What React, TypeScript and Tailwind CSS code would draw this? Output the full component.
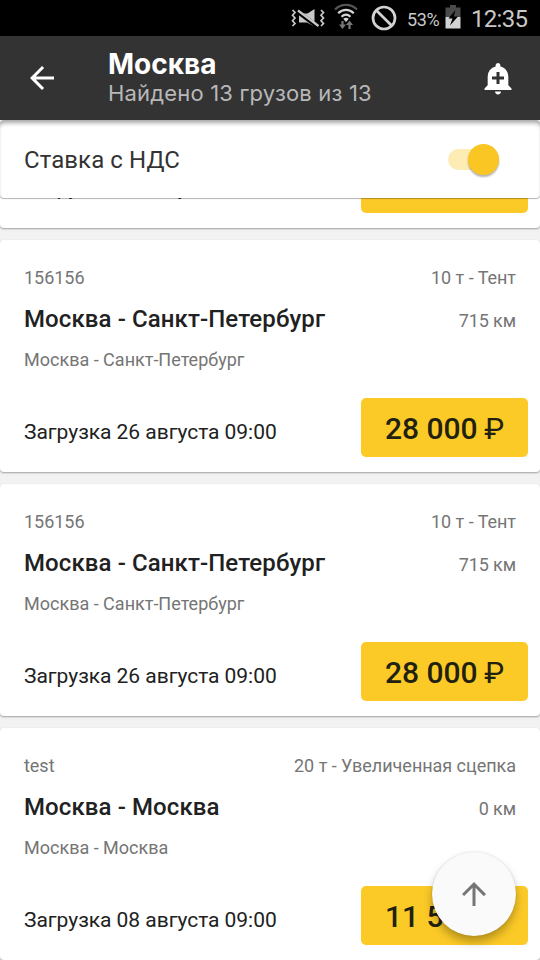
import React from "react";
import { MdAddAlert, MdArrowBack, MdArrowUpward } from "react-icons/md";

interface Cargo {
  id: string;
  name: string;
  load: string;
  title: string;
  distance: string;
  route: string;
  date: string;
  price: string;
}

const cargos: Cargo[] = [
  {
    id: "c1",
    name: "156156",
    load: "10 т - Тент",
    title: "Москва - Санкт-Петербург",
    distance: "715 км",
    route: "Москва - Санкт-Петербург",
    date: "Загрузка 26 августа 09:00",
    price: "28 000",
  },
  {
    id: "c2",
    name: "156156",
    load: "10 т - Тент",
    title: "Москва - Санкт-Петербург",
    distance: "715 км",
    route: "Москва - Санкт-Петербург",
    date: "Загрузка 26 августа 09:00",
    price: "28 000",
  },
  {
    id: "c3",
    name: "156156",
    load: "10 т - Тент",
    title: "Москва - Санкт-Петербург",
    distance: "715 км",
    route: "Москва - Санкт-Петербург",
    date: "Загрузка 26 августа 09:00",
    price: "28 000",
  },
  {
    id: "c4",
    name: "test",
    load: "20 т - Увеличенная сцепка",
    title: "Москва - Москва",
    distance: "0 км",
    route: "Москва - Москва",
    date: "Загрузка 08 августа 09:00",
    price: "11 500",
  },
];

function MuteIcon() {
  return (
    <svg width="34" height="20" viewBox="0 0 34 20" fill="none" stroke="#c8c8c8" strokeWidth="1.700">
      <path d="M1.500 2l2.500 2.500-2.500 2.700 2.500 2.800-2.500 2.700 2.500 2.800-2.500 2.500" />
      <path d="M30 2l2.500 2.500-2.500 2.700 2.500 2.800-2.500 2.700 2.500 2.800-2.500 2.500" />
      <path d="M8 5.500h8.500L23.500 1v17.500L16 14.500H8z" fill="#c8c8c8" stroke="none" />
      <path d="M6.500 3.500l20.500 15.500" stroke="#000" strokeWidth="4.200" />
      <path d="M7 2.500l20.500 15.500" strokeWidth="2.200" />
    </svg>
  );
}

function WifiIcon() {
  return (
    <svg width="24" height="27" viewBox="0 0 24 27" fill="none" stroke="#d6d6d6" strokeWidth="2.200">
      <path d="M1 6.500c6.200-6.200 15.800-6.200 22 0" stroke="#555" />
      <path d="M4.200 10.200c4.600-4.400 11-4.400 15.600 0M7.500 13.800c2.800-2.600 6.200-2.600 9 0" />
      <path d="M9.200 15.800c1.700-1.400 3.900-1.400 5.600 0L12 19z" fill="#d6d6d6" stroke="none" />
      <path d="M8.500 18v5M15.500 26v-5" stroke="#777" strokeWidth="2.200" />
      <path d="M5 21.500h7L8.500 26zM12 22h7l-3.500-4.500z" fill="#777" stroke="none" />
    </svg>
  );
}

function BlockedIcon() {
  return (
    <svg width="26" height="26" viewBox="0 0 26 26" fill="none" stroke="#d2d2d2" strokeWidth="2.700">
      <circle cx="13" cy="13" r="11" />
      <path d="M5.200 5.200l15.600 15.600" />
    </svg>
  );
}

function BatteryIcon() {
  return (
    <svg width="16" height="24" viewBox="0 0 16 24">
      <path d="M5 0h6v2.500h4.500V12H.5V2.500H5z" fill="#4a4a4a" />
      <path d="M.5 12h15v11.500H.5z" fill="#d2d2d2" />
      <path d="M10.500 5L3.500 13.500h4L5 20.500l8-9H8.800z" fill="#000" />
    </svg>
  );
}

function StatusBar() {
  return (
    <div className="flex h-9 shrink-0 items-center justify-end bg-black pr-3 text-[#c8c8c8]">
      <MuteIcon />
      <span className="ml-[9px] pb-1">
        <WifiIcon />
      </span>
      <span className="ml-[13px]">
        <BlockedIcon />
      </span>
      <span className="ml-[10px] w-[32px] pt-0.5 text-[18px] tracking-[-0.4px]">53%</span>
      <span className="ml-[6px] pb-0.5">
        <BatteryIcon />
      </span>
      <span className="ml-[10px] w-[57px] pt-0.5 text-[24px] tracking-[-0.7px]">12:35</span>
    </div>
  );
}

function Toolbar() {
  return (
    <header className="flex h-21 shrink-0 items-center bg-[#333] px-6">
      <button className="text-white">
        <MdArrowBack size={36} />
      </button>
      <div className="ml-12 flex-1 font-['Inter',sans-serif]">
        <h1 className="text-[28px] leading-[30px] font-bold text-white">Москва</h1>
        <p className="text-[22px] leading-[28px] tracking-[0.18px] text-[#b8b8b8]">
          Найдено 13 грузов из 13
        </p>
      </div>
      <button className="text-white">
        <MdAddAlert size={36} />
      </button>
    </header>
  );
}

function VatFilter() {
  return (
    <div className="relative z-10 flex h-[78px] shrink-0 items-center justify-between rounded bg-white pr-[41px] pl-6 shadow-[0_1px_1px_rgba(0,0,0,0.3),inset_0_5px_4px_-2px_rgba(0,0,0,0.35)]">
      <span className="pt-0.5 text-[24px] tracking-[0.08px] text-[#333]">Ставка с НДС</span>
      <div className="flex h-[21px] w-[51px] items-center justify-end rounded-full bg-[#fdedb5]">
        <span className="size-[31px] rounded-full bg-[#f9c623] shadow-[0_2px_2px_rgba(0,0,0,0.3)]" />
      </div>
    </div>
  );
}

function CargoCard({ cargo }: { cargo: Cargo }) {
  return (
    <article className="flex h-[232px] shrink-0 flex-col rounded bg-white pt-[27px] pr-3 pb-[15px] pl-6 shadow-[0_1px_2px_rgba(0,0,0,0.35)]">
      <div className="flex justify-between pr-3 text-[18px] leading-[21px] tracking-[-0.03px] text-[#757575]">
        <span>{cargo.name}</span>
        <span>{cargo.load}</span>
      </div>
      <div className="mt-[17px] flex items-baseline justify-between pr-3">
        <h2 className="text-[24px] leading-[28px] font-medium tracking-[0.1px] text-[#212121]">
          {cargo.title}
        </h2>
        <span className="text-[18px] tracking-[-0.1px] text-[#757575]">{cargo.distance}</span>
      </div>
      <p className="mt-[15px] text-[18px] leading-[21px] text-[#757575]">{cargo.route}</p>
      <div className="mt-auto flex items-center justify-between">
        <span className="pt-2.5 text-[21px] tracking-[-0.04px] text-[#212121]">{cargo.date}</span>
        <button className="h-[59px] w-[167px] rounded-[5px] bg-[#fcca27] pt-0.5 text-[30px] font-medium text-[#212112]">
          {cargo.price} <span className="-ml-px font-normal">₽</span>
        </button>
      </div>
    </article>
  );
}

export default function App() {
  return (
    <div className="relative flex h-[960px] w-[540px] flex-col overflow-hidden bg-[#f2f2f2] font-['Roboto',sans-serif]">
      <StatusBar />
      <Toolbar />
      <VatFilter />

      {/* List is scrolled to the end, the first card slides under the filter */}
      <main className="flex min-h-0 flex-1 flex-col justify-end gap-3 overflow-hidden">
        {cargos.map((cargo) => (
          <CargoCard key={cargo.id} cargo={cargo} />
        ))}
      </main>

      <button className="absolute right-6 bottom-6 z-20 flex size-21 items-center justify-center rounded-full bg-[#fafafa] text-[#757575] shadow-[0_6px_10px_rgba(0,0,0,0.28),0_0_2px_rgba(0,0,0,0.15)]">
        <MdArrowUpward size={36} />
      </button>
    </div>
  );
}
